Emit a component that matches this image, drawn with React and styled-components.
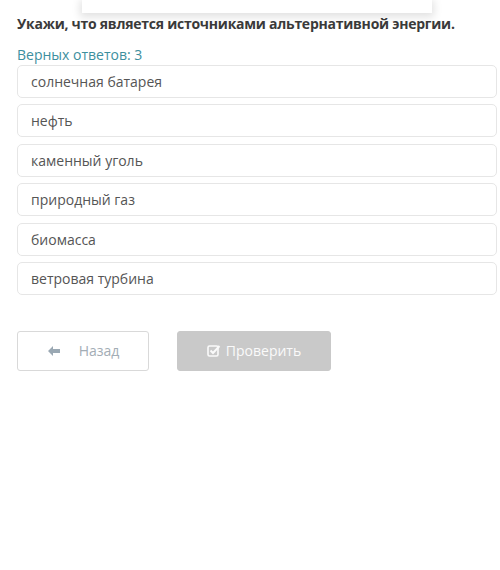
import React from 'react';
import styled, {createGlobalStyle} from 'styled-components';

const Global = createGlobalStyle`
    body {
        margin: 0;
        background: #ffffff;
        font-family: "Open Sans", "Liberation Sans", sans-serif;
    }
`;

const Page = styled.div`
    width: 500px;
    height: 570px;
    overflow: hidden;
    background: #fff;
`;

const TopCard = styled.div`
    width: 350px;
    height: 13px;
    margin-left: 82px;
    background: #fff;
    box-shadow: 0px 2px 8px 2px rgba(0, 0, 0, 0.12);
`;

const Body = styled.div`
    padding: 0 3px 0 17px;
`;

const Title = styled.div`
    margin-top: 1px;
    font-size: 14px;
    font-weight: bold;
    color: #3a3a3a;
    line-height: 20px;
    letter-spacing: -0.25px;
`;

const Count = styled.div`
    margin-top: 11px;
    font-size: 14px;
    color: #3d8f9e;
    line-height: 20px;
`;

const List = styled.div`
    display: flex;
    flex-direction: column;
    gap: 6.4px;
`;

const Option = styled.div`
    height: 33px;
    box-sizing: border-box;
    border: 1px solid #e6e6e6;
    border-radius: 5px;
    padding-left: 13px;
    display: flex;
    align-items: center;
    font-size: 14px;
    color: #555;
`;

const Buttons = styled.div`
    display: flex;
    gap: 28px;
    margin-top: 36px;
`;

const Button = styled.div`
    height: 40px;
    width: ${p => p.w}px;
    box-sizing: border-box;
    border-radius: 3px;
    display: flex;
    align-items: center;
    justify-content: center;
    gap: ${p => p.gap}px;
    font-size: 14px;
    border: 1px solid ${p => p.primary ? '#c9c9c9' : '#d9d9d9'};
    background: ${p => p.primary ? '#c9c9c9' : '#fff'};
    color: ${p => p.primary ? '#fafafa' : '#a3adb5'};
`;

const options = [
    'солнечная батарея',
    'нефть',
    'каменный уголь',
    'природный газ',
    'биомасса',
    'ветровая турбина',
];

export default () => (
    <Page>
        <Global/>
        <TopCard/>
        <Body>
            <Title>Укажи, что является источниками альтернативной энергии.</Title>
            <Count>Верных ответов: 3</Count>
            <List>
                {options.map(o => <Option key={o}>{o}</Option>)}
            </List>
            <Buttons>
                <Button w={132} gap={18}>
                    <svg width="14" height="12" viewBox="0 0 14 12">
                        <path d="M6 1 L1 6 L6 11 L6 8 L13 8 L13 4 L6 4 Z" fill="#9aa8b3"/>
                    </svg>
                    Назад
                </Button>
                <Button w={154} gap={5} primary>
                    <svg width="14" height="13" viewBox="0 0 14 13">
                        <rect x="1" y="2" width="10" height="10" rx="1.5" fill="none" stroke="#fafafa" strokeWidth="1.6"/>
                        <path d="M3.5 6.5 L6 9 L12.5 2" fill="none" stroke="#fafafa" strokeWidth="2"/>
                    </svg>
                    Проверить
                </Button>
            </Buttons>
        </Body>
    </Page>
);
